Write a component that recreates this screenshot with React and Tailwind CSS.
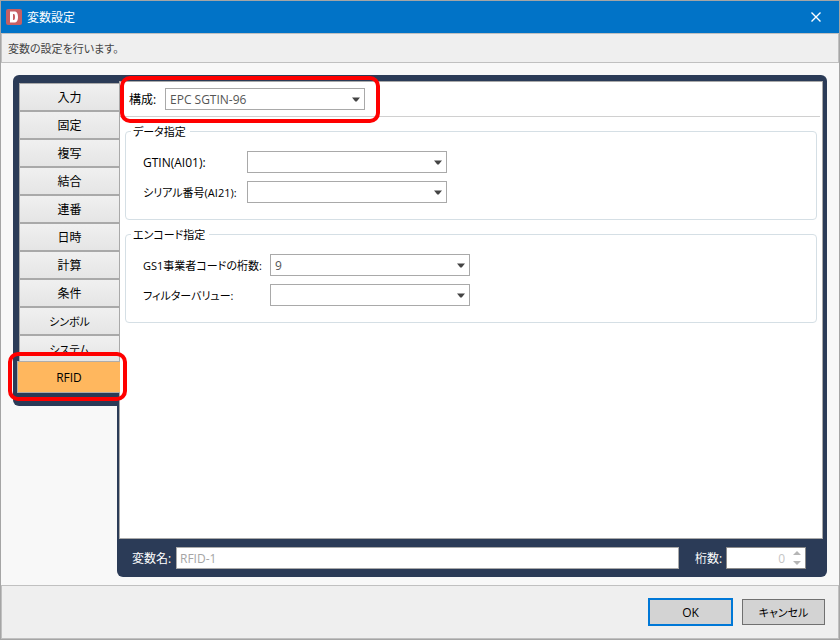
import { useState } from 'react';

const TABS = ['入力', '固定', '複写', '結合', '連番', '日時', '計算', '条件', 'シンボル', 'システム', 'RFID'];
const KANA_TABS = ['シンボル', 'システム'];

function ComboBox({ id, value, onChange, options }) {
  return (
    <div className="relative w-[200px]">
      <select
        id={id}
        value={value}
        onChange={(e) => onChange(e.target.value)}
        className="block h-[22px] w-full appearance-none border border-[#a9a9a9] bg-white pl-1 pr-5 pt-px text-[12px] leading-[20px] text-[#555] outline-none"
      >
        {options.map((option) => (
          <option key={option} value={option}>
            {option}
          </option>
        ))}
      </select>
      <svg className="pointer-events-none absolute right-[5px] top-[9px] h-[5px] w-2" viewBox="0 0 8 5">
        <path d="M0 0.5H8L4.7 4.5H3.3Z" fill="#444" />
      </svg>
    </div>
  );
}

function Group({ title, children }) {
  return (
    <fieldset className="ml-[5px] mr-[5px] mt-[5px] rounded-[4px] border border-[#d5dfe5] pb-4 pl-[17px] pt-[11px]">
      <legend className="-ml-3 pl-[2px] pr-1 pt-[2px] text-[11px] leading-[16px]">{title}</legend>
      <div className="flex flex-col gap-2">{children}</div>
    </fieldset>
  );
}

function Field({ id, label, labelClass, ...rest }) {
  return (
    <div className="flex items-center">
      <label htmlFor={id} className={`shrink-0 whitespace-nowrap pt-[2px] ${labelClass}`}>
        {label}
      </label>
      <ComboBox id={id} {...rest} />
    </div>
  );
}

export default function App() {
  const [tab, setTab] = useState('RFID');
  const [scheme, setScheme] = useState('EPC SGTIN-96');
  const [gtin, setGtin] = useState('');
  const [serial, setSerial] = useState('');
  const [companyDigits, setCompanyDigits] = useState('9');
  const [filter, setFilter] = useState('');

  return (
    <div className="flex min-h-screen flex-col border border-[#a5a5a5] bg-[#f8f8f8] font-['Open_Sans','Noto_Sans_CJK_JP',sans-serif] text-[12px] leading-[18px] text-black [font-feature-settings:'palt']">
      <header className="flex h-8 items-center bg-[#0173c7] pl-[5px] pr-[18px] text-white">
        <svg className="h-4 w-4" viewBox="0 0 16 16">
          <rect width="16" height="16" rx="2" fill="#c75f63" />
          <path fillRule="evenodd" d="M4 2.5H8C11 2.5 12 4.5 12 8S11 13.5 8 13.5H4ZM7 5V11H7.7C8.7 11 9 10 9 8S8.700 5 7.700 5Z" fill="#fff" />
        </svg>
        <h1 className="ml-[5px] flex-1 pt-[2px]">変数設定</h1>
        <button type="button" aria-label="閉じる" className="flex h-4 w-[10px] items-center">
          <svg className="h-[10px] w-[10px]" viewBox="0 0 10 10" stroke="#fff" strokeWidth="1.4">
            <path d="M0.5 0.5L9.500 9.500M9.500 0.500L0.500 9.500" />
          </svg>
        </button>
      </header>

      <p className="flex h-[30px] items-center border border-[#c0c0c0] bg-[#efefef] pl-[6px] pt-[2px] text-[11px] text-[#444]">
        変数の設定を行います。
      </p>

      <main className="flex flex-1 items-stretch pb-2 pl-3 pr-3 pt-3">
        <nav className="relative z-10 w-[106px] shrink-0 self-start rounded-l-[6px] bg-[#2b3b57] pb-[13px] pl-[6px] pt-2">
          {TABS.map((name) =>
            name === tab ? (
              <div key={name} className="relative -ml-[2px] -mr-px -mt-[2px] h-8">
                <button
                  type="button"
                  className="h-full w-full border border-r-0 border-[#b0aca8] bg-[#ffb75e] pt-[2px]"
                >
                  {name}
                </button>
                <div className="pointer-events-none absolute -bottom-2 -left-[9px] -right-[7px] -top-[9px] rounded-[10px] border-4 border-[#f00]" />
              </div>
            ) : (
              <button
                key={name}
                type="button"
                onClick={() => setTab(name)}
                className={`block h-7 w-[101px] border border-[#a9a9a9] bg-linear-to-b from-[#f0f0f0] to-[#e5e5e5] pt-[2px] ${
                  KANA_TABS.includes(name) ? 'text-[11px]' : 'text-[12px]'
                }`}
              >
                {name}
              </button>
            )
          )}
        </nav>

        <section className="-ml-[2px] flex min-w-0 flex-1 flex-col rounded-[6px] rounded-tl-none bg-[#2b3b57] pl-[2px] pr-1 pt-[6px]">
          <div className="flex-1 border border-[#a9a9a9] bg-white">
            <div className="relative mr-[2px] flex h-[35px] items-center border-b border-[#d0d0d0] pl-[9px]">
              <Field
                id="scheme"
                label="構成:"
                labelClass="w-9"
                value={scheme}
                onChange={setScheme}
                options={['EPC SGTIN-96']}
              />
              <div className="pointer-events-none absolute -bottom-[7px] -top-[6px] left-0 w-[260px] rounded-[10px] border-4 border-[#f00]" />
            </div>

            <Group title="データ指定">
              <Field id="gtin" label="GTIN(AI01):" labelClass="w-[104px]" value={gtin} onChange={setGtin} options={['']} />
              <Field
                id="serial"
                label="シリアル番号(AI21):"
                labelClass="w-[104px] text-[11px]"
                value={serial}
                onChange={setSerial}
                options={['']}
              />
            </Group>

            <Group title="エンコード指定">
              <Field
                id="company-digits"
                label="GS1事業者コードの桁数:"
                labelClass="w-[127px] text-[11px]"
                value={companyDigits}
                onChange={setCompanyDigits}
                options={['6', '7', '8', '9', '10', '11', '12']}
              />
              <Field
                id="filter"
                label="フィルターバリュー:"
                labelClass="w-[127px] text-[11px]"
                value={filter}
                onChange={setFilter}
                options={['']}
              />
            </Group>
          </div>

          <div className="flex h-[38px] items-center pl-[13px] pr-[17px] text-white">
            <label htmlFor="variable-name" className="w-11 shrink-0 pt-[2px]">
              変数名:
            </label>
            <input
              id="variable-name"
              type="text"
              value="RFID-1"
              disabled
              className="h-[22px] min-w-0 flex-1 border border-[#a9a9a9] bg-white pl-[3px] pr-1 text-[#a5a5a5]"
            />
            <label htmlFor="digits" className="ml-4 w-[31px] shrink-0 whitespace-nowrap pt-[2px]">
              桁数:
            </label>
            <div className="relative w-20">
              <input
                id="digits"
                type="number"
                value="0"
                disabled
                className="block h-[22px] w-full border border-[#8a8a8a] bg-white pr-5 text-right text-[#c5c5c5] [appearance:textfield] [&::-webkit-inner-spin-button]:appearance-none"
              />
              <svg className="pointer-events-none absolute right-[5px] top-1 h-[14px] w-2" viewBox="0 0 8 14" fill="#b5b5b5">
                <path d="M0 4L4 0L8 4Z" />
                <path d="M0 10H8L4 14Z" />
              </svg>
            </div>
          </div>
        </section>
      </main>

      <footer className="flex h-[54px] items-center justify-end gap-[9px] border border-[#c0c0c0] bg-[#efefef] pr-[13px]">
        <button type="button" className="h-7 w-[85px] border-2 border-[#0078d7] bg-[#d3d3d3] pt-[2px]">
          OK
        </button>
        <button type="button" className="h-[26px] w-[83px] border border-[#707070] bg-[#d3d3d3] pt-[2px] text-[11px]">
          キャンセル
        </button>
      </footer>
    </div>
  );
}
